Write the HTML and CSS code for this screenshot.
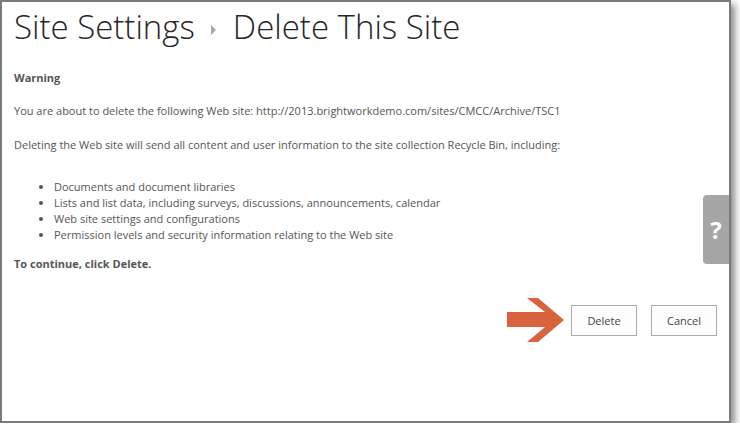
FILE: index.html
```html
<!DOCTYPE html>
<html lang="en">
<head>
<meta charset="utf-8"/>
<title>Site Settings - Delete This Site</title>
<link rel="stylesheet" href="styles.css">
</head>
<body>
<div class="frame">
  <h1 class="page-title">
    <span>Site Settings</span>
    <svg class="crumb-arrow" width="6" height="10" viewBox="0 0 6 10"><path d="M0 0 L5 5 L0 10 Z" fill="#a8a8a8"/></svg>
    <span>Delete This Site</span>
  </h1>
  <div class="content">
    <p class="warning">Warning</p>
    <p>You are about to delete the following Web site: http://2013.brightworkdemo.com/sites/CMCC/Archive/TSC1</p>
    <p class="deleting">Deleting the Web site will send all content and user information to the site collection Recycle Bin, including:</p>
    <ul class="items">
      <li>Documents and document libraries</li>
      <li>Lists and list data, including surveys, discussions, announcements, calendar</li>
      <li>Web site settings and configurations</li>
      <li>Permission levels and security information relating to the Web site</li>
    </ul>
    <p class="continue">To continue, click Delete.</p>
  </div>
  <div class="actions">
    <svg class="pointer" width="58" height="45" viewBox="0 0 58 45">
      <polygon points="0,14 38,14 20,0 31,0 57,22 31,44 20,44 38,29 0,29" fill="#d9623f"/>
    </svg>
    <button class="btn">Delete</button>
    <button class="btn">Cancel</button>
  </div>
  <div class="help-tab">?</div>
</div>
</body>
</html>
```

FILE: styles.css
```css
body {
  margin: 0;
  padding: 0;
  background-color: #fff;
  font-family: 'Open Sans', sans-serif;
}
.frame {
  position: relative;
  width: 727px;
  height: 419px;
  border: 2px solid #7b7b7b;
  background-color: #fff;
  box-shadow: 4px 4px 7px rgba(0, 0, 0, 0.45);
}
.page-title {
  margin: 0;
  padding: 0 0 0 12px;
  font-size: 33px;
  font-weight: 300;
  color: #262626;
  display: flex;
  align-items: center;
  gap: 16px;
  height: 49px;
}
.crumb-arrow {
  margin-top: 6px;
}
.content {
  padding: 0 12px;
  font-size: 11px;
  color: #555;
}
.content p {
  margin: 0;
  line-height: 16px;
}
.warning {
  font-weight: bold;
  padding-top: 19px;
}
.content p + p {
  margin-top: 17px;
}
.content .deleting {
  margin-top: 18px;
}
.items {
  margin: 26px 0 0;
  padding-left: 40px;
  line-height: 16px;
}
.content .continue {
  margin-top: 13px;
  font-weight: bold;
}
.actions {
  display: flex;
  justify-content: flex-end;
  align-items: center;
  padding: 26px 12px 0 0;
  gap: 14px;
}
.pointer {
  margin-right: -8px;
}
.btn {
  width: 66px;
  height: 31px;
  border: 1px solid #ababab;
  background-color: #fdfdfd;
  font-family: 'Open Sans', sans-serif;
  font-size: 11px;
  color: #444;
  padding: 0;
}
.help-tab {
  position: absolute;
  right: 0;
  top: 193px;
  width: 26px;
  height: 69px;
  background-color: #a6a6a6;
  border-radius: 4px 0 0 4px;
  color: #fff;
  font-size: 24px;
  font-weight: bold;
  display: flex;
  align-items: center;
  justify-content: center;
}
```
